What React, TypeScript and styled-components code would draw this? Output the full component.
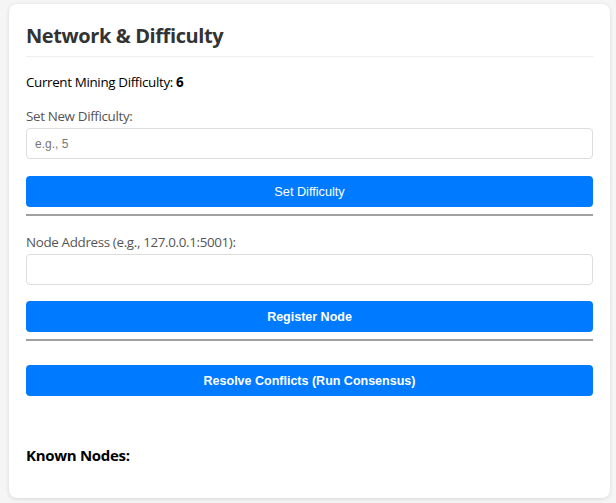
import React from "react";
import styled, { createGlobalStyle } from "styled-components";

const Global = createGlobalStyle`
  html, body { margin: 0; padding: 0; background: #f4f5f4; }
  body { font-family: "Open Sans", "Noto Sans", sans-serif; }
  * { box-sizing: border-box; }
`;

const Page = styled.div`
  padding: 4px 6px 5px 9px;
`;

const Card = styled.section`
  background: #fff;
  border-radius: 8px;
  box-shadow: 0 1px 4px rgba(0, 0, 0, 0.12);
  padding: 18px 17px 26px 17px;
  height: 494px;
  display: flex;
  flex-direction: column;
`;

const Title = styled.h2`
  margin: 0;
  font-size: 20px;
  font-weight: 700;
  color: #333;
  letter-spacing: -0.4px;
  line-height: 27px;
  padding-bottom: 7px;
  border-bottom: 1px solid #eee;
`;

const Info = styled.p`
  margin: 15px 0 0;
  font-size: 13.4px;
  letter-spacing: -0.35px;
  color: #000;
  line-height: 20px;
  b { font-weight: 700; }
`;

const Label = styled.label<{ $top: number }>`
  display: block;
  margin-top: ${(p) => p.$top}px;
  font-size: 13.4px;
  letter-spacing: -0.35px;
  color: #555;
  line-height: 20px;
`;

const Input = styled.input`
  display: block;
  width: 100%;
  height: 31px;
  margin-top: 2px;
  border: 1px solid #ddd;
  border-radius: 4px;
  padding: 0 8px;
  font-family: "Liberation Sans", Arial, sans-serif;
  font-size: 12px;
  outline: none;
  &::placeholder { color: #777; }
`;

const Button = styled.button<{ $bold?: boolean; $top: number }>`
  display: block;
  width: 100%;
  height: 31px;
  margin-top: ${(p) => p.$top}px;
  border: none;
  border-radius: 4px;
  background: #007bff;
  color: #fff;
  font-family: "Liberation Sans", Arial, sans-serif;
  font-size: ${(p) => (p.$bold ? "12.5px" : "12.7px")};
  font-weight: ${(p) => (p.$bold ? 700 : 400)};
  cursor: pointer;
`;

const Rule = styled.hr`
  margin: 7px 0 0;
  border: none;
  border-top: 2px solid #a0a0a0;
  height: 0;
`;

const Subhead = styled.h3`
  margin: 49px 0 0;
  font-size: 15px;
  font-weight: 700;
  color: #000;
  letter-spacing: -0.3px;
  line-height: 20px;
`;

export default function App() {
  return (
    <Page>
      <Global />
      <Card>
        <Title>Network &amp; Difficulty</Title>
        <Info>
          Current Mining Difficulty: <b>6</b>
        </Info>
        <Label $top={14}>Set New Difficulty:</Label>
        <Input placeholder="e.g., 5" />
        <Button $top={17}>Set Difficulty</Button>
        <Rule />
        <Label $top={16}>Node Address (e.g., 127.0.0.1:5001):</Label>
        <Input />
        <Button $top={16} $bold>Register Node</Button>
        <Rule />
        <Button $top={24} $bold>Resolve Conflicts (Run Consensus)</Button>
        <Subhead>Known Nodes:</Subhead>
      </Card>
    </Page>
  );
}
